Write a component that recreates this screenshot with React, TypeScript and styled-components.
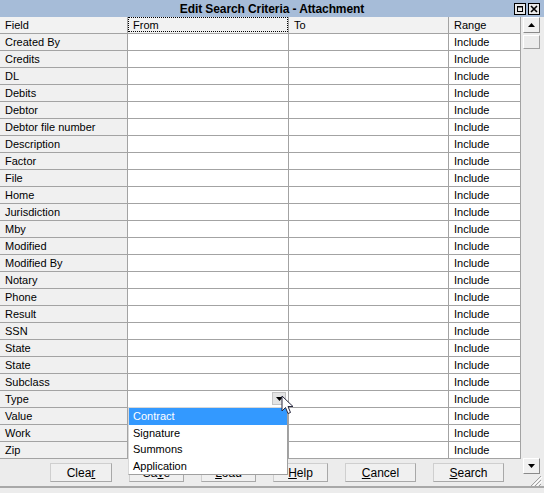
import { createGlobalStyle } from "styled-components";
import styled from "styled-components";

const GlobalStyle = createGlobalStyle`
  html, body {
    margin: 0;
    padding: 0;
    background: #ececec;
  }
  body {
    font-family: "Liberation Sans", Arial, sans-serif;
    font-size: 11px;
    color: #000;
  }
`;

const Window = styled.div`
  width: 544px;
  height: 488px;
  display: flex;
  flex-direction: column;
  background: #ececec;
  border-bottom: 2px solid #a8a8a8;
  box-sizing: border-box;
`;

const TitleBar = styled.div`
  height: 17px;
  flex: none;
  display: flex;
  align-items: center;
  justify-content: center;
  position: relative;
  background: #a6bcd8;
  font-weight: bold;
  font-size: 12px;
  letter-spacing: -0.1px;
`;

const TitleButtons = styled.div`
  position: absolute;
  right: 4px;
  top: 3px;
  display: flex;
  gap: 2px;
`;

const TitleButton = styled.div`
  width: 10px;
  height: 10px;
  border: 1px solid #000;
  background: #e8e8e8;
  display: flex;
  align-items: center;
  justify-content: center;
`;

const Main = styled.div`
  flex: 1;
  display: flex;
  min-height: 0;
`;

const LeftPane = styled.div`
  width: 521px;
  display: flex;
  flex-direction: column;
`;

const Grid = styled.div`
  display: flex;
  flex-direction: column;
`;

const Row = styled.div`
  display: flex;
  height: 17px;
`;

const Cell = styled.div<{ $w: number; $kind?: "field" | "head" | "data" }>`
  position: relative;
  width: ${(p) => p.$w}px;
  flex: none;
  height: 17px;
  box-sizing: border-box;
  border-right: 1px solid #a3a3a3;
  border-bottom: 1px solid #a3a3a3;
  background: ${(p) =>
    p.$kind === "field" ? "#f0f0f0" : p.$kind === "head" ? "#f2f2f2" : "#ffffff"};
  padding-left: 5px;
  display: flex;
  align-items: center;
  white-space: nowrap;
`;

const FocusBox = styled.div`
  position: absolute;
  inset: 0 0 1px 0;
  border: 1px dotted #000;
  pointer-events: none;
`;

const DropButton = styled.div`
  position: absolute;
  right: 2px;
  top: 1px;
  width: 14px;
  height: 13px;
  box-sizing: border-box;
  background: #e4e4e4;
  border: 1px solid #c4c4c4;
  display: flex;
  align-items: center;
  justify-content: center;
`;

const Popup = styled.div`
  position: absolute;
  left: 0;
  top: 16px;
  width: 160px;
  box-sizing: border-box;
  background: #fff;
  border: 1px solid #a0a0a0;
  border-left-color: #d8d8d8;
  border-top-color: #d8d8d8;
  z-index: 5;
  display: flex;
  flex-direction: column;
`;

const PopupItem = styled.div<{ $selected?: boolean }>`
  height: 16.5px;
  display: flex;
  align-items: center;
  padding-left: 4px;
  background: ${(p) => (p.$selected ? "#3399ff" : "#fff")};
  color: ${(p) => (p.$selected ? "#fff" : "#000")};
`;

const Cursor = styled.svg`
  position: absolute;
  left: 153px;
  top: 4px;
  z-index: 6;
`;

const ButtonBar = styled.div`
  flex: 1;
  display: flex;
  align-items: flex-start;
  gap: 17px;
  padding: 4px 0 0 50px;
`;

const Button = styled.div<{ $w: number }>`
  width: ${(p) => p.$w}px;
  height: 19px;
  box-sizing: border-box;
  background: #f0f0f0;
  border: 1px solid #cfcfcf;
  border-right-color: #a8a8a8;
  border-bottom-color: #a8a8a8;
  display: flex;
  align-items: center;
  justify-content: center;
  font-size: 12px;
`;

const ScrollColumn = styled.div`
  width: 23px;
  display: flex;
  flex-direction: column;
  padding-left: 2px;
  box-sizing: border-box;
`;

const ScrollButton = styled.div`
  width: 17px;
  height: 16px;
  box-sizing: border-box;
  background: #f0f0f0;
  border: 1px solid #fff;
  border-right-color: #8a8a8a;
  border-bottom-color: #8a8a8a;
  display: flex;
  align-items: center;
  justify-content: center;
`;

const Thumb = styled.div`
  width: 17px;
  height: 14px;
  margin-top: 2px;
  box-sizing: border-box;
  background: #ececec;
  border: 1px solid #fff;
  border-right-color: #a0a0a0;
  border-bottom-color: #a0a0a0;
`;

const Spacer = styled.div`
  flex: 1;
`;

const Grip = styled.svg`
  margin: 0 0 0 5px;
`;

const fields = [
  "Created By",
  "Credits",
  "DL",
  "Debits",
  "Debtor",
  "Debtor file number",
  "Description",
  "Factor",
  "File",
  "Home",
  "Jurisdiction",
  "Mby",
  "Modified",
  "Modified By",
  "Notary",
  "Phone",
  "Result",
  "SSN",
  "State",
  "State",
  "Subclass",
  "Type",
  "Value",
  "Work",
  "Zip",
];

const widths = [128, 161, 160, 72];

function Triangle({ up }: { up?: boolean }) {
  return (
    <svg width="7" height="4" viewBox="0 0 7 4">
      <path d={up ? "M0 4 L7 4 L3.5 0 Z" : "M0 0 L7 0 L3.5 4 Z"} fill="#000" />
    </svg>
  );
}

function Accel({ text, at }: { text: string; at: number }) {
  return (
    <span>
      {text.slice(0, at)}
      <u>{text[at]}</u>
      {text.slice(at + 1)}
    </span>
  );
}

export default function App() {
  return (
    <>
      <GlobalStyle />
      <Window>
        <TitleBar>
          Edit Search Criteria - Attachment
          <TitleButtons>
            <TitleButton>
              <svg width="6" height="6" viewBox="0 0 6 6">
                <rect x="0.5" y="0.5" width="5" height="5" fill="none" stroke="#000" />
                <rect x="0" y="0" width="6" height="1.5" fill="#000" />
              </svg>
            </TitleButton>
            <TitleButton>
              <svg width="8" height="8" viewBox="0 0 8 8">
                <path d="M1 1 L7 7 M7 1 L1 7" stroke="#000" strokeWidth="1.6" />
              </svg>
            </TitleButton>
          </TitleButtons>
        </TitleBar>
        <Main>
          <LeftPane>
            <Grid>
              <Row>
                <Cell $w={widths[0]} $kind="head">Field</Cell>
                <Cell $w={widths[1]} $kind="head">
                  From
                  <FocusBox />
                </Cell>
                <Cell $w={widths[2]} $kind="head">To</Cell>
                <Cell $w={widths[3]} $kind="head">Range</Cell>
              </Row>
              {fields.map((f, i) => (
                <Row key={i}>
                  <Cell $w={widths[0]} $kind="field">{f}</Cell>
                  <Cell $w={widths[1]}>
                    {f === "Type" && (
                      <>
                        <DropButton>
                          <Triangle />
                        </DropButton>
                        <Popup>
                          <PopupItem $selected>Contract</PopupItem>
                          <PopupItem>Signature</PopupItem>
                          <PopupItem>Summons</PopupItem>
                          <PopupItem>Application</PopupItem>
                        </Popup>
                        <Cursor width="13" height="20" viewBox="0 0 13 20">
                          <path
                            d="M1 1 L1 16 L4.5 12.5 L7 18.5 L9.5 17.5 L7 11.5 L12 11.5 Z"
                            fill="#fff"
                            stroke="#2a2a40"
                            strokeWidth="1"
                          />
                        </Cursor>
                      </>
                    )}
                  </Cell>
                  <Cell $w={widths[2]} />
                  <Cell $w={widths[3]}>Include</Cell>
                </Row>
              ))}
            </Grid>
            <ButtonBar>
              <Button $w={62}><Accel text="Clear" at={4} /></Button>
              <Button $w={55}><Accel text="Save" at={2} /></Button>
              <Button $w={55}><Accel text="Load" at={0} /></Button>
              <Button $w={55}><Accel text="Help" at={0} /></Button>
              <Button $w={71}><Accel text="Cancel" at={0} /></Button>
              <Button $w={71}><Accel text="Search" at={0} /></Button>
            </ButtonBar>
          </LeftPane>
          <ScrollColumn>
            <ScrollButton>
              <Triangle up />
            </ScrollButton>
            <Thumb />
            <Spacer />
            <ScrollButton>
              <Triangle />
            </ScrollButton>
            <Grip width="14" height="12" viewBox="0 0 14 12">
              <path d="M13 2 L3 12 M13 6 L7 12 M13 10 L11 12" stroke="#a0a0a0" strokeWidth="1" />
              <path d="M14 3 L5 12 M14 7 L9 12" stroke="#fff" strokeWidth="1" />
            </Grip>
          </ScrollColumn>
        </Main>
      </Window>
    </>
  );
}
